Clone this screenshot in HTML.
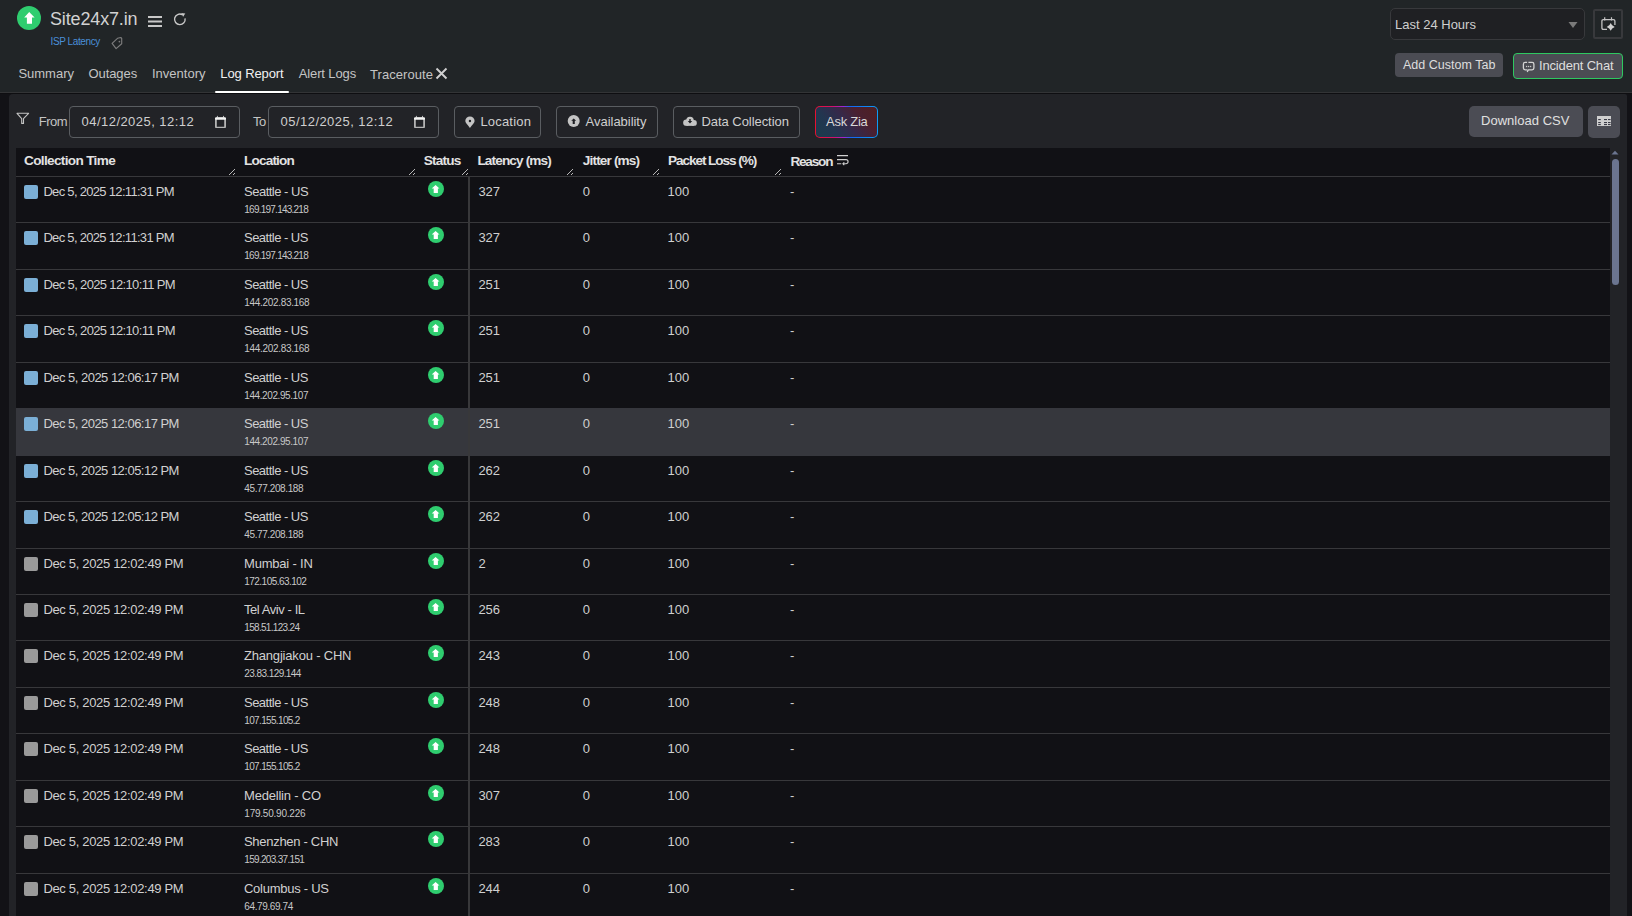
<!DOCTYPE html>
<html><head><meta charset="utf-8"><style>
html,body{margin:0;padding:0;width:1632px;height:916px;overflow:hidden;background:#121216;font-family:"Liberation Sans", sans-serif;}
.t{position:absolute;white-space:pre;line-height:1;}
.r{position:absolute;}
</style></head><body>
<div class="r" style="left:0px;top:0px;width:1632px;height:92px;background:#212527"></div>
<div class="r" style="left:0px;top:92px;width:1632px;height:1px;background:#333436"></div>
<div class="r" style="left:0px;top:93px;width:1632px;height:823px;background:#121216"></div>
<div class="r" style="left:0px;top:93px;width:1632px;height:1px;background:#0e0e11"></div>
<div class="r" style="left:9px;top:94px;width:1618px;height:822px;background:#222327;border-top-left-radius:4px;border-top-right-radius:2px"></div>
<svg class="r" style="left:17px;top:6px" width="24" height="24" viewBox="0 0 24 24"><circle cx="12" cy="12" r="12" fill="#2fcd6f"/><path d="M12.2 6 L17.6 11.6 L15 11.6 L15 17.8 L9.9 17.8 L9.9 11.6 L7.2 11.6 Z" fill="#fff"/></svg>
<div class="t" style="left:50px;top:10.16px;font-size:18px;color:#d2d2d2;letter-spacing:-0.150px;">Site24x7.in</div>
<svg class="r" style="left:148px;top:13.5px" width="15" height="14" viewBox="0 0 15 14"><rect x="0" y="2" width="14" height="2" fill="#c8c8c8"/><rect x="0" y="6.5" width="14" height="2" fill="#c8c8c8"/><rect x="0" y="11" width="14" height="2" fill="#c8c8c8"/></svg>
<svg class="r" style="left:171px;top:11px" width="18" height="18" viewBox="0 0 18 18"><path d="M14.05 7.4 A5.3 5.3 0 1 1 11.2 3.6" fill="none" stroke="#c8c8c8" stroke-width="1.35"/><path d="M10.2 1.9 L14.3 2.4 L12.1 5.8 Z" fill="#c8c8c8"/></svg>
<div class="t" style="left:50.5px;top:37.44px;font-size:10px;color:#4a8fd8;letter-spacing:-0.400px;">ISP Latency</div>
<svg class="r" style="left:110px;top:35px" width="15" height="16" viewBox="0 0 15 16"><path d="M2.1 8.3 L7.5 3.3 L10.8 2.5 L11.7 3.5 L11.7 8.8 L6.1 13.6 Z" fill="none" stroke="#7c7c7c" stroke-width="1.15" stroke-linejoin="round"/><circle cx="9.4" cy="6.6" r="0.85" fill="#7c7c7c"/></svg>
<div class="t" style="left:18.4px;top:66.80px;font-size:13px;color:#c4c4c4;">Summary</div>
<div class="t" style="left:88.5px;top:66.80px;font-size:13px;color:#c4c4c4;letter-spacing:-0.083px;">Outages</div>
<div class="t" style="left:152px;top:66.80px;font-size:13px;color:#c4c4c4;">Inventory</div>
<div class="t" style="left:220.3px;top:67.30px;font-size:13px;color:#f2f2f2;letter-spacing:-0.111px;">Log Report</div>
<div class="t" style="left:298.7px;top:67.30px;font-size:13px;color:#c4c4c4;letter-spacing:-0.111px;">Alert Logs</div>
<div class="t" style="left:370px;top:68.20px;font-size:13px;color:#c4c4c4;letter-spacing:0.056px;">Traceroute</div>
<svg class="r" style="left:435px;top:67px" width="13" height="13" viewBox="0 0 13 13"><path d="M1.5 1.5 L11.5 11.5 M11.5 1.5 L1.5 11.5" stroke="#d0d0d0" stroke-width="1.9"/></svg>
<div class="r" style="left:215px;top:91px;width:74px;height:2px;background:#fff;border-radius:1px"></div>
<div class="r" style="left:1390px;top:8px;width:195px;height:32px;box-sizing:border-box;border:1px solid #38393c;border-radius:5px;background:#1f2023"></div>
<div class="t" style="left:1395px;top:18.30px;font-size:13px;color:#cfcfcf;">Last 24 Hours</div>
<svg class="r" style="left:1568px;top:21px" width="10" height="8" viewBox="0 0 10 8"><path d="M0.5 1 L9.5 1 L5 7 Z" fill="#7a7a7a"/></svg>
<div class="r" style="left:1593px;top:9px;width:30px;height:30px;box-sizing:border-box;border:2px solid #38393c;border-radius:2px"></div>
<svg class="r" style="left:1600px;top:16px" width="17" height="16" viewBox="0 0 17 16"><path d="M7 13.3 L3.4 13.3 Q1.9 13.3 1.9 11.8 L1.9 5.1 Q1.9 3.6 3.4 3.6 L13.4 3.6 Q14.9 3.6 14.9 5.1 L14.9 9.1" fill="none" stroke="#c4c4c4" stroke-width="1.3"/><path d="M4.7 1.2 L4.7 4.6 M11.5 1.2 L11.5 4.6" stroke="#c4c4c4" stroke-width="1.2"/><path d="M10.7 7.0 Q11.7 9.9 14.7 10.9 Q11.7 11.9 10.7 14.8 Q9.7 11.9 6.7 10.9 Q9.7 9.9 10.7 7.0 Z" fill="#d0d0d0"/></svg>
<div class="r" style="left:1395px;top:53px;width:108px;height:24px;background:#4b4c53;border-radius:4px"></div>
<div class="t" style="left:1403px;top:59.22px;font-size:12.5px;color:#dedede;letter-spacing:0.022px;">Add Custom Tab</div>
<div class="r" style="left:1513px;top:53px;width:110px;height:26px;box-sizing:border-box;border:1px solid #2ec860;background:#4b4c53;border-radius:4px"></div>
<svg class="r" style="left:1522px;top:60px" width="14" height="14" viewBox="0 0 14 14"><path d="M5.1 2.4 L3.2 2.4 Q1.4 2.4 1.4 4.2 L1.4 8.0 Q1.4 9.8 3.2 9.8 L5.4 9.8 M6.4 2.4 L10.1 2.4 Q11.9 2.4 11.9 4.2 L11.9 8.0 Q11.9 9.8 10.1 9.8 L6.4 9.8 L5.2 12" fill="none" stroke="#d4d4d4" stroke-width="1.3"/><circle cx="4.6" cy="6.5" r="0.7" fill="#c8c8c8"/><circle cx="6.6" cy="6.5" r="0.7" fill="#c8c8c8"/><circle cx="8.6" cy="6.5" r="0.7" fill="#c8c8c8"/></svg>
<div class="t" style="left:1539px;top:59.00px;font-size:13px;color:#dedede;letter-spacing:-0.167px;">Incident Chat</div>
<svg class="r" style="left:16px;top:112px" width="14" height="13" viewBox="0 0 14 13"><path d="M1 1.3 L12.6 1.3 L7.5 6.6 L7.5 11.4 L5.7 11.4 L5.7 6.6 Z" fill="none" stroke="#c4c4c4" stroke-width="1.1" stroke-linejoin="round"/></svg>
<div class="t" style="left:38.7px;top:115.20px;font-size:13px;color:#c4c4c4;letter-spacing:-0.500px;">From</div>
<div class="r" style="left:69px;top:106px;width:171px;height:32px;box-sizing:border-box;border:1px solid #5a5d61;border-radius:4px"></div>
<div class="t" style="left:81.6px;top:115.20px;font-size:13px;color:#cfcfcf;letter-spacing:0.451px;">04/12/2025, 12:12</div>
<svg class="r" style="left:215px;top:114.6px" width="11" height="13" viewBox="0 0 11 13"><rect x="0.9" y="3" width="9.2" height="9.6" rx="1.2" fill="none" stroke="#b4b4b4" stroke-width="1.8"/><rect x="0" y="2.4" width="11" height="2.3" rx="0.8" fill="#f4f4f4"/><path d="M1.6 2.6 L2.3 0.4 L3.1 2.6 Z M7.8 2.6 L8.5 0.4 L9.3 2.6 Z" fill="#e8e8e8"/></svg>
<div class="t" style="left:253px;top:115.20px;font-size:13px;color:#c4c4c4;letter-spacing:-0.500px;">To</div>
<div class="r" style="left:268px;top:106px;width:171px;height:32px;box-sizing:border-box;border:1px solid #5a5d61;border-radius:4px"></div>
<div class="t" style="left:280.6px;top:115.20px;font-size:13px;color:#cfcfcf;letter-spacing:0.451px;">05/12/2025, 12:12</div>
<svg class="r" style="left:414px;top:114.6px" width="11" height="13" viewBox="0 0 11 13"><rect x="0.9" y="3" width="9.2" height="9.6" rx="1.2" fill="none" stroke="#b4b4b4" stroke-width="1.8"/><rect x="0" y="2.4" width="11" height="2.3" rx="0.8" fill="#f4f4f4"/><path d="M1.6 2.6 L2.3 0.4 L3.1 2.6 Z M7.8 2.6 L8.5 0.4 L9.3 2.6 Z" fill="#e8e8e8"/></svg>
<div class="r" style="left:454px;top:106px;width:87px;height:32px;box-sizing:border-box;border:1px solid #5a5d61;border-radius:4px"></div>
<svg class="r" style="left:465px;top:115.6px" width="10" height="13" viewBox="0 0 10 13"><path d="M4.95 12 C2.2 8.6 0.3 6.6 0.3 5.1 A4.65 4.65 0 0 1 9.6 5.1 C9.6 6.6 7.7 8.6 4.95 12 Z" fill="#c4c4c4"/><circle cx="4.95" cy="5" r="1.2" fill="#1e1f23"/></svg>
<div class="t" style="left:480.4px;top:114.60px;font-size:13px;color:#cfcfcf;letter-spacing:0.198px;">Location</div>
<div class="r" style="left:556px;top:106px;width:102px;height:32px;box-sizing:border-box;border:1px solid #5a5d61;border-radius:4px"></div>
<svg class="r" style="left:567px;top:115px" width="14" height="13" viewBox="0 0 14 13"><circle cx="6.7" cy="6.1" r="6" fill="#c4c4c4"/><path d="M6.7 3.5 L9.2 5.8 L7.8 5.8 L7.8 8.9 L5.7 8.9 L5.7 5.8 L4.2 5.8 Z" fill="#1e1f23"/></svg>
<div class="t" style="left:585.6px;top:114.60px;font-size:13px;color:#cfcfcf;letter-spacing:-0.032px;">Availability</div>
<div class="r" style="left:673px;top:106px;width:127px;height:32px;box-sizing:border-box;border:1px solid #5a5d61;border-radius:4px"></div>
<svg class="r" style="left:683px;top:116px" width="14" height="11" viewBox="0 0 14 11" fill="#c4c4c4"><circle cx="7" cy="4.6" r="3.8"/><circle cx="3.3" cy="6.7" r="3.15"/><circle cx="10.9" cy="6.9" r="2.95"/><rect x="3.3" y="6" width="7.6" height="3.85"/><path d="M6.3 3.0 L7.7 3.0 L7.7 5.1 L9.2 5.1 L7 7.6 L4.8 5.1 L6.3 5.1 Z" fill="#1e1f23"/></svg>
<div class="t" style="left:701.5px;top:114.60px;font-size:13px;color:#cfcfcf;letter-spacing:-0.053px;">Data Collection</div>
<div class="r" style="left:815px;top:106px;width:63px;height:32px;box-sizing:border-box;border-radius:5px;padding:1px;background:linear-gradient(88deg,#e8102e 0%,#d0126e 30%,#9a28d8 46%,#1566f2 56%,#0c9cf8 100%)"><div style="width:100%;height:100%;border-radius:4px;background:linear-gradient(50deg,#1b3c4c 0%,#223650 28%,#35294a 50%,#4a2030 72%,#4f1f20 100%)"></div></div>
<div class="t" style="left:826px;top:114.60px;font-size:13px;color:#d8d8d8;letter-spacing:-0.250px;">Ask Zia</div>
<div class="r" style="left:1469px;top:106px;width:114px;height:31px;background:#4b4c54;border-radius:5px"></div>
<div class="t" style="left:1481px;top:114.00px;font-size:13px;color:#e0e0e0;letter-spacing:0.024px;">Download CSV</div>
<div class="r" style="left:1588px;top:106px;width:32px;height:32px;background:#4b4c54;border-radius:5px"></div>
<svg class="r" style="left:1597px;top:116px" width="14" height="10" viewBox="0 0 14 10"><rect x="0" y="0" width="14" height="10" fill="#cfcfcf"/><rect x="1.2" y="3.0" width="2.6" height="1.1" fill="#3a3b46"/><rect x="1.2" y="6.0" width="2.6" height="1.1" fill="#3a3b46"/><rect x="1.2" y="8.0" width="2.6" height="1.1" fill="#3a3b46"/><rect x="7.0" y="3.0" width="3.0" height="1.1" fill="#3a3b46"/><rect x="7.0" y="6.0" width="3.0" height="1.1" fill="#3a3b46"/><rect x="7.0" y="8.0" width="3.0" height="1.1" fill="#3a3b46"/><rect x="11.0" y="3.0" width="2.6" height="1.1" fill="#3a3b46"/><rect x="11.0" y="6.0" width="2.6" height="1.1" fill="#3a3b46"/><rect x="11.0" y="8.0" width="2.6" height="1.1" fill="#3a3b46"/></svg>
<div class="r" style="left:16px;top:148px;width:1594px;height:768px;background:#111115"></div>
<div class="t" style="left:24px;top:154.19px;font-size:13.6px;color:#e2e2e2;font-weight:700;letter-spacing:-0.661px;">Collection Time</div>
<div class="t" style="left:244px;top:154.19px;font-size:13.6px;color:#e2e2e2;font-weight:700;letter-spacing:-0.832px;">Location</div>
<div class="t" style="left:423.8px;top:154.19px;font-size:13.6px;color:#e2e2e2;font-weight:700;letter-spacing:-0.820px;">Status</div>
<div class="t" style="left:477.4px;top:154.19px;font-size:13.6px;color:#e2e2e2;font-weight:700;letter-spacing:-0.857px;">Latency (ms)</div>
<div class="t" style="left:582.8px;top:154.19px;font-size:13.6px;color:#e2e2e2;font-weight:700;letter-spacing:-0.840px;">Jitter (ms)</div>
<div class="t" style="left:668px;top:154.19px;font-size:13.6px;color:#e2e2e2;font-weight:700;letter-spacing:-1.073px;">Packet Loss (%)</div>
<div class="t" style="left:790.4px;top:155.19px;font-size:13.6px;color:#e2e2e2;font-weight:700;letter-spacing:-1.200px;">Reason</div>
<svg class="r" style="left:229px;top:169px" width="6" height="6" viewBox="0 0 6 6" fill="#b8b8b8" shape-rendering="crispEdges"><rect x="0" y="5" width="1" height="1"/><rect x="1" y="4" width="1" height="1"/><rect x="2" y="3" width="1" height="1"/><rect x="3" y="2" width="1" height="1"/><rect x="4" y="1" width="1" height="1"/><rect x="5" y="0" width="1" height="1"/><rect x="4" y="5" width="1" height="1"/><rect x="5" y="4" width="1" height="1"/></svg>
<svg class="r" style="left:409px;top:169px" width="6" height="6" viewBox="0 0 6 6" fill="#b8b8b8" shape-rendering="crispEdges"><rect x="0" y="5" width="1" height="1"/><rect x="1" y="4" width="1" height="1"/><rect x="2" y="3" width="1" height="1"/><rect x="3" y="2" width="1" height="1"/><rect x="4" y="1" width="1" height="1"/><rect x="5" y="0" width="1" height="1"/><rect x="4" y="5" width="1" height="1"/><rect x="5" y="4" width="1" height="1"/></svg>
<svg class="r" style="left:462px;top:169px" width="6" height="6" viewBox="0 0 6 6" fill="#b8b8b8" shape-rendering="crispEdges"><rect x="0" y="5" width="1" height="1"/><rect x="1" y="4" width="1" height="1"/><rect x="2" y="3" width="1" height="1"/><rect x="3" y="2" width="1" height="1"/><rect x="4" y="1" width="1" height="1"/><rect x="5" y="0" width="1" height="1"/><rect x="4" y="5" width="1" height="1"/><rect x="5" y="4" width="1" height="1"/></svg>
<svg class="r" style="left:567px;top:169px" width="6" height="6" viewBox="0 0 6 6" fill="#b8b8b8" shape-rendering="crispEdges"><rect x="0" y="5" width="1" height="1"/><rect x="1" y="4" width="1" height="1"/><rect x="2" y="3" width="1" height="1"/><rect x="3" y="2" width="1" height="1"/><rect x="4" y="1" width="1" height="1"/><rect x="5" y="0" width="1" height="1"/><rect x="4" y="5" width="1" height="1"/><rect x="5" y="4" width="1" height="1"/></svg>
<svg class="r" style="left:653px;top:169px" width="6" height="6" viewBox="0 0 6 6" fill="#b8b8b8" shape-rendering="crispEdges"><rect x="0" y="5" width="1" height="1"/><rect x="1" y="4" width="1" height="1"/><rect x="2" y="3" width="1" height="1"/><rect x="3" y="2" width="1" height="1"/><rect x="4" y="1" width="1" height="1"/><rect x="5" y="0" width="1" height="1"/><rect x="4" y="5" width="1" height="1"/><rect x="5" y="4" width="1" height="1"/></svg>
<svg class="r" style="left:775px;top:169px" width="6" height="6" viewBox="0 0 6 6" fill="#b8b8b8" shape-rendering="crispEdges"><rect x="0" y="5" width="1" height="1"/><rect x="1" y="4" width="1" height="1"/><rect x="2" y="3" width="1" height="1"/><rect x="3" y="2" width="1" height="1"/><rect x="4" y="1" width="1" height="1"/><rect x="5" y="0" width="1" height="1"/><rect x="4" y="5" width="1" height="1"/><rect x="5" y="4" width="1" height="1"/></svg>
<svg class="r" style="left:836px;top:154px" width="14" height="13" viewBox="0 0 14 13"><path d="M1 1.6 L12 1.6 M1 5.6 L10 5.6 A2.05 2.05 0 0 1 10 9.7 L7 9.7 M1 9.7 L5.3 9.7" fill="none" stroke="#d0d0d0" stroke-width="1.15"/><path d="M8.3 8.3 L6.9 9.7 L8.3 11.1" fill="none" stroke="#d0d0d0" stroke-width="1.15"/></svg>
<div class="r" style="left:16px;top:176px;width:1594px;height:1px;background:#38383b"></div>
<div class="r" style="left:16px;top:222px;width:1594px;height:1px;background:#38383b"></div>
<div class="r" style="left:468px;top:177px;width:2px;height:46px;background:#38383a"></div>
<div class="r" style="left:24px;top:185px;width:14px;height:14px;background:#7bafd6;border-radius:2px"></div>
<div class="t" style="left:43.4px;top:184.80px;font-size:13px;color:#d0d0d0;letter-spacing:-0.690px;">Dec 5, 2025 12:11:31 PM</div>
<div class="t" style="left:244px;top:184.90px;font-size:13px;color:#d0d0d0;letter-spacing:-0.496px;">Seattle - US</div>
<div class="t" style="left:244.3px;top:205.44px;font-size:10px;color:#c8c8c8;letter-spacing:-0.761px;">169.197.143.218</div>
<svg class="r" style="left:428px;top:181.00px" width="16" height="16" viewBox="0 0 16 16"><circle cx="8" cy="8" r="8" fill="#2fcd6f"/><path d="M7.6 4 L11.5 7.6 L9.9 7.6 L9.9 11.9 L5.7 11.9 L5.7 7.6 L3.7 7.6 Z" fill="#fff"/></svg>
<div class="t" style="left:478.4px;top:184.90px;font-size:13px;color:#d0d0d0;">327</div>
<div class="t" style="left:582.8px;top:184.90px;font-size:13px;color:#d0d0d0;">0</div>
<div class="t" style="left:667.6px;top:184.90px;font-size:13px;color:#d0d0d0;">100</div>
<div class="t" style="left:790px;top:184.90px;font-size:13px;color:#d0d0d0;">-</div>
<div class="r" style="left:16px;top:269px;width:1594px;height:1px;background:#38383b"></div>
<div class="r" style="left:468px;top:223px;width:2px;height:47px;background:#38383a"></div>
<div class="r" style="left:24px;top:231px;width:14px;height:14px;background:#7bafd6;border-radius:2px"></div>
<div class="t" style="left:43.4px;top:230.80px;font-size:13px;color:#d0d0d0;letter-spacing:-0.690px;">Dec 5, 2025 12:11:31 PM</div>
<div class="t" style="left:244px;top:230.90px;font-size:13px;color:#d0d0d0;letter-spacing:-0.516px;">Seattle - US</div>
<div class="t" style="left:244.3px;top:251.43px;font-size:10px;color:#c8c8c8;letter-spacing:-0.761px;">169.197.143.218</div>
<svg class="r" style="left:428px;top:227.00px" width="16" height="16" viewBox="0 0 16 16"><circle cx="8" cy="8" r="8" fill="#2fcd6f"/><path d="M7.6 4 L11.5 7.6 L9.9 7.6 L9.9 11.9 L5.7 11.9 L5.7 7.6 L3.7 7.6 Z" fill="#fff"/></svg>
<div class="t" style="left:478.4px;top:230.90px;font-size:13px;color:#d0d0d0;">327</div>
<div class="t" style="left:582.8px;top:230.90px;font-size:13px;color:#d0d0d0;">0</div>
<div class="t" style="left:667.6px;top:230.90px;font-size:13px;color:#d0d0d0;">100</div>
<div class="t" style="left:790px;top:230.90px;font-size:13px;color:#d0d0d0;">-</div>
<div class="r" style="left:16px;top:315px;width:1594px;height:1px;background:#38383b"></div>
<div class="r" style="left:468px;top:270px;width:2px;height:46px;background:#38383a"></div>
<div class="r" style="left:24px;top:278px;width:14px;height:14px;background:#7bafd6;border-radius:2px"></div>
<div class="t" style="left:43.4px;top:277.80px;font-size:13px;color:#d0d0d0;letter-spacing:-0.645px;">Dec 5, 2025 12:10:11 PM</div>
<div class="t" style="left:244px;top:277.90px;font-size:13px;color:#d0d0d0;letter-spacing:-0.516px;">Seattle - US</div>
<div class="t" style="left:244.3px;top:298.44px;font-size:10px;color:#c8c8c8;letter-spacing:-0.321px;">144.202.83.168</div>
<svg class="r" style="left:428px;top:274.00px" width="16" height="16" viewBox="0 0 16 16"><circle cx="8" cy="8" r="8" fill="#2fcd6f"/><path d="M7.6 4 L11.5 7.6 L9.9 7.6 L9.9 11.9 L5.7 11.9 L5.7 7.6 L3.7 7.6 Z" fill="#fff"/></svg>
<div class="t" style="left:478.4px;top:277.90px;font-size:13px;color:#d0d0d0;">251</div>
<div class="t" style="left:582.8px;top:277.90px;font-size:13px;color:#d0d0d0;">0</div>
<div class="t" style="left:667.6px;top:277.90px;font-size:13px;color:#d0d0d0;">100</div>
<div class="t" style="left:790px;top:277.90px;font-size:13px;color:#d0d0d0;">-</div>
<div class="r" style="left:16px;top:362px;width:1594px;height:1px;background:#38383b"></div>
<div class="r" style="left:468px;top:316px;width:2px;height:47px;background:#38383a"></div>
<div class="r" style="left:24px;top:324px;width:14px;height:14px;background:#7bafd6;border-radius:2px"></div>
<div class="t" style="left:43.4px;top:323.80px;font-size:13px;color:#d0d0d0;letter-spacing:-0.645px;">Dec 5, 2025 12:10:11 PM</div>
<div class="t" style="left:244px;top:323.90px;font-size:13px;color:#d0d0d0;letter-spacing:-0.516px;">Seattle - US</div>
<div class="t" style="left:244.3px;top:344.44px;font-size:10px;color:#c8c8c8;letter-spacing:-0.321px;">144.202.83.168</div>
<svg class="r" style="left:428px;top:320.00px" width="16" height="16" viewBox="0 0 16 16"><circle cx="8" cy="8" r="8" fill="#2fcd6f"/><path d="M7.6 4 L11.5 7.6 L9.9 7.6 L9.9 11.9 L5.7 11.9 L5.7 7.6 L3.7 7.6 Z" fill="#fff"/></svg>
<div class="t" style="left:478.4px;top:323.90px;font-size:13px;color:#d0d0d0;">251</div>
<div class="t" style="left:582.8px;top:323.90px;font-size:13px;color:#d0d0d0;">0</div>
<div class="t" style="left:667.6px;top:323.90px;font-size:13px;color:#d0d0d0;">100</div>
<div class="t" style="left:790px;top:323.90px;font-size:13px;color:#d0d0d0;">-</div>
<div class="r" style="left:16px;top:408px;width:1594px;height:1px;background:#38383b"></div>
<div class="r" style="left:468px;top:363px;width:2px;height:46px;background:#38383a"></div>
<div class="r" style="left:24px;top:371px;width:14px;height:14px;background:#7bafd6;border-radius:2px"></div>
<div class="t" style="left:43.4px;top:370.80px;font-size:13px;color:#d0d0d0;letter-spacing:-0.517px;">Dec 5, 2025 12:06:17 PM</div>
<div class="t" style="left:244px;top:370.90px;font-size:13px;color:#d0d0d0;letter-spacing:-0.516px;">Seattle - US</div>
<div class="t" style="left:244.3px;top:391.44px;font-size:10px;color:#c8c8c8;letter-spacing:-0.413px;">144.202.95.107</div>
<svg class="r" style="left:428px;top:367.00px" width="16" height="16" viewBox="0 0 16 16"><circle cx="8" cy="8" r="8" fill="#2fcd6f"/><path d="M7.6 4 L11.5 7.6 L9.9 7.6 L9.9 11.9 L5.7 11.9 L5.7 7.6 L3.7 7.6 Z" fill="#fff"/></svg>
<div class="t" style="left:478.4px;top:370.90px;font-size:13px;color:#d0d0d0;">251</div>
<div class="t" style="left:582.8px;top:370.90px;font-size:13px;color:#d0d0d0;">0</div>
<div class="t" style="left:667.6px;top:370.90px;font-size:13px;color:#d0d0d0;">100</div>
<div class="t" style="left:790px;top:370.90px;font-size:13px;color:#d0d0d0;">-</div>
<div class="r" style="left:16px;top:408px;width:1594px;height:48px;background:#36373d"></div>
<div class="r" style="left:468px;top:409px;width:2px;height:47px;background:#38383a"></div>
<div class="r" style="left:24px;top:417px;width:14px;height:14px;background:#7bafd6;border-radius:2px"></div>
<div class="t" style="left:43.4px;top:416.80px;font-size:13px;color:#d0d0d0;letter-spacing:-0.517px;">Dec 5, 2025 12:06:17 PM</div>
<div class="t" style="left:244px;top:416.90px;font-size:13px;color:#d0d0d0;letter-spacing:-0.516px;">Seattle - US</div>
<div class="t" style="left:244.3px;top:437.44px;font-size:10px;color:#c8c8c8;letter-spacing:-0.413px;">144.202.95.107</div>
<svg class="r" style="left:428px;top:413.00px" width="16" height="16" viewBox="0 0 16 16"><circle cx="8" cy="8" r="8" fill="#2fcd6f"/><path d="M7.6 4 L11.5 7.6 L9.9 7.6 L9.9 11.9 L5.7 11.9 L5.7 7.6 L3.7 7.6 Z" fill="#fff"/></svg>
<div class="t" style="left:478.4px;top:416.90px;font-size:13px;color:#d0d0d0;">251</div>
<div class="t" style="left:582.8px;top:416.90px;font-size:13px;color:#d0d0d0;">0</div>
<div class="t" style="left:667.6px;top:416.90px;font-size:13px;color:#d0d0d0;">100</div>
<div class="t" style="left:790px;top:416.90px;font-size:13px;color:#d0d0d0;">-</div>
<div class="r" style="left:16px;top:501px;width:1594px;height:1px;background:#38383b"></div>
<div class="r" style="left:468px;top:456px;width:2px;height:46px;background:#38383a"></div>
<div class="r" style="left:24px;top:464px;width:14px;height:14px;background:#7bafd6;border-radius:2px"></div>
<div class="t" style="left:43.4px;top:463.80px;font-size:13px;color:#d0d0d0;letter-spacing:-0.517px;">Dec 5, 2025 12:05:12 PM</div>
<div class="t" style="left:244px;top:463.90px;font-size:13px;color:#d0d0d0;letter-spacing:-0.516px;">Seattle - US</div>
<div class="t" style="left:244.3px;top:484.44px;font-size:10px;color:#c8c8c8;letter-spacing:-0.390px;">45.77.208.188</div>
<svg class="r" style="left:428px;top:460.00px" width="16" height="16" viewBox="0 0 16 16"><circle cx="8" cy="8" r="8" fill="#2fcd6f"/><path d="M7.6 4 L11.5 7.6 L9.9 7.6 L9.9 11.9 L5.7 11.9 L5.7 7.6 L3.7 7.6 Z" fill="#fff"/></svg>
<div class="t" style="left:478.4px;top:463.90px;font-size:13px;color:#d0d0d0;">262</div>
<div class="t" style="left:582.8px;top:463.90px;font-size:13px;color:#d0d0d0;">0</div>
<div class="t" style="left:667.6px;top:463.90px;font-size:13px;color:#d0d0d0;">100</div>
<div class="t" style="left:790px;top:463.90px;font-size:13px;color:#d0d0d0;">-</div>
<div class="r" style="left:16px;top:548px;width:1594px;height:1px;background:#38383b"></div>
<div class="r" style="left:468px;top:502px;width:2px;height:47px;background:#38383a"></div>
<div class="r" style="left:24px;top:510px;width:14px;height:14px;background:#7bafd6;border-radius:2px"></div>
<div class="t" style="left:43.4px;top:509.80px;font-size:13px;color:#d0d0d0;letter-spacing:-0.517px;">Dec 5, 2025 12:05:12 PM</div>
<div class="t" style="left:244px;top:509.90px;font-size:13px;color:#d0d0d0;letter-spacing:-0.516px;">Seattle - US</div>
<div class="t" style="left:244.3px;top:530.43px;font-size:10px;color:#c8c8c8;letter-spacing:-0.390px;">45.77.208.188</div>
<svg class="r" style="left:428px;top:506.00px" width="16" height="16" viewBox="0 0 16 16"><circle cx="8" cy="8" r="8" fill="#2fcd6f"/><path d="M7.6 4 L11.5 7.6 L9.9 7.6 L9.9 11.9 L5.7 11.9 L5.7 7.6 L3.7 7.6 Z" fill="#fff"/></svg>
<div class="t" style="left:478.4px;top:509.90px;font-size:13px;color:#d0d0d0;">262</div>
<div class="t" style="left:582.8px;top:509.90px;font-size:13px;color:#d0d0d0;">0</div>
<div class="t" style="left:667.6px;top:509.90px;font-size:13px;color:#d0d0d0;">100</div>
<div class="t" style="left:790px;top:509.90px;font-size:13px;color:#d0d0d0;">-</div>
<div class="r" style="left:16px;top:594px;width:1594px;height:1px;background:#38383b"></div>
<div class="r" style="left:468px;top:549px;width:2px;height:46px;background:#38383a"></div>
<div class="r" style="left:24px;top:557px;width:14px;height:14px;background:#9a9a9a;border-radius:2px"></div>
<div class="t" style="left:43.4px;top:556.80px;font-size:13px;color:#d0d0d0;letter-spacing:-0.326px;">Dec 5, 2025 12:02:49 PM</div>
<div class="t" style="left:244px;top:556.90px;font-size:13px;color:#d0d0d0;letter-spacing:-0.200px;">Mumbai - IN</div>
<div class="t" style="left:244.3px;top:577.43px;font-size:10px;color:#c8c8c8;letter-spacing:-0.537px;">172.105.63.102</div>
<svg class="r" style="left:428px;top:553.00px" width="16" height="16" viewBox="0 0 16 16"><circle cx="8" cy="8" r="8" fill="#2fcd6f"/><path d="M7.6 4 L11.5 7.6 L9.9 7.6 L9.9 11.9 L5.7 11.9 L5.7 7.6 L3.7 7.6 Z" fill="#fff"/></svg>
<div class="t" style="left:478.4px;top:556.90px;font-size:13px;color:#d0d0d0;">2</div>
<div class="t" style="left:582.8px;top:556.90px;font-size:13px;color:#d0d0d0;">0</div>
<div class="t" style="left:667.6px;top:556.90px;font-size:13px;color:#d0d0d0;">100</div>
<div class="t" style="left:790px;top:556.90px;font-size:13px;color:#d0d0d0;">-</div>
<div class="r" style="left:16px;top:640px;width:1594px;height:1px;background:#38383b"></div>
<div class="r" style="left:468px;top:595px;width:2px;height:46px;background:#38383a"></div>
<div class="r" style="left:24px;top:603px;width:14px;height:14px;background:#9a9a9a;border-radius:2px"></div>
<div class="t" style="left:43.4px;top:602.80px;font-size:13px;color:#d0d0d0;letter-spacing:-0.326px;">Dec 5, 2025 12:02:49 PM</div>
<div class="t" style="left:244px;top:602.90px;font-size:13px;color:#d0d0d0;letter-spacing:-0.430px;">Tel Aviv - IL</div>
<div class="t" style="left:244.3px;top:623.43px;font-size:10px;color:#c8c8c8;letter-spacing:-0.690px;">158.51.123.24</div>
<svg class="r" style="left:428px;top:599.00px" width="16" height="16" viewBox="0 0 16 16"><circle cx="8" cy="8" r="8" fill="#2fcd6f"/><path d="M7.6 4 L11.5 7.6 L9.9 7.6 L9.9 11.9 L5.7 11.9 L5.7 7.6 L3.7 7.6 Z" fill="#fff"/></svg>
<div class="t" style="left:478.4px;top:602.90px;font-size:13px;color:#d0d0d0;">256</div>
<div class="t" style="left:582.8px;top:602.90px;font-size:13px;color:#d0d0d0;">0</div>
<div class="t" style="left:667.6px;top:602.90px;font-size:13px;color:#d0d0d0;">100</div>
<div class="t" style="left:790px;top:602.90px;font-size:13px;color:#d0d0d0;">-</div>
<div class="r" style="left:16px;top:687px;width:1594px;height:1px;background:#38383b"></div>
<div class="r" style="left:468px;top:641px;width:2px;height:47px;background:#38383a"></div>
<div class="r" style="left:24px;top:649px;width:14px;height:14px;background:#9a9a9a;border-radius:2px"></div>
<div class="t" style="left:43.4px;top:648.80px;font-size:13px;color:#d0d0d0;letter-spacing:-0.326px;">Dec 5, 2025 12:02:49 PM</div>
<div class="t" style="left:244px;top:648.90px;font-size:13px;color:#d0d0d0;letter-spacing:-0.192px;">Zhangjiakou - CHN</div>
<div class="t" style="left:244.3px;top:669.43px;font-size:10px;color:#c8c8c8;letter-spacing:-0.573px;">23.83.129.144</div>
<svg class="r" style="left:428px;top:645.00px" width="16" height="16" viewBox="0 0 16 16"><circle cx="8" cy="8" r="8" fill="#2fcd6f"/><path d="M7.6 4 L11.5 7.6 L9.9 7.6 L9.9 11.9 L5.7 11.9 L5.7 7.6 L3.7 7.6 Z" fill="#fff"/></svg>
<div class="t" style="left:478.4px;top:648.90px;font-size:13px;color:#d0d0d0;">243</div>
<div class="t" style="left:582.8px;top:648.90px;font-size:13px;color:#d0d0d0;">0</div>
<div class="t" style="left:667.6px;top:648.90px;font-size:13px;color:#d0d0d0;">100</div>
<div class="t" style="left:790px;top:648.90px;font-size:13px;color:#d0d0d0;">-</div>
<div class="r" style="left:16px;top:733px;width:1594px;height:1px;background:#38383b"></div>
<div class="r" style="left:468px;top:688px;width:2px;height:46px;background:#38383a"></div>
<div class="r" style="left:24px;top:696px;width:14px;height:14px;background:#9a9a9a;border-radius:2px"></div>
<div class="t" style="left:43.4px;top:695.80px;font-size:13px;color:#d0d0d0;letter-spacing:-0.326px;">Dec 5, 2025 12:02:49 PM</div>
<div class="t" style="left:244px;top:695.90px;font-size:13px;color:#d0d0d0;letter-spacing:-0.516px;">Seattle - US</div>
<div class="t" style="left:244.3px;top:716.43px;font-size:10px;color:#c8c8c8;letter-spacing:-0.656px;">107.155.105.2</div>
<svg class="r" style="left:428px;top:692.00px" width="16" height="16" viewBox="0 0 16 16"><circle cx="8" cy="8" r="8" fill="#2fcd6f"/><path d="M7.6 4 L11.5 7.6 L9.9 7.6 L9.9 11.9 L5.7 11.9 L5.7 7.6 L3.7 7.6 Z" fill="#fff"/></svg>
<div class="t" style="left:478.4px;top:695.90px;font-size:13px;color:#d0d0d0;">248</div>
<div class="t" style="left:582.8px;top:695.90px;font-size:13px;color:#d0d0d0;">0</div>
<div class="t" style="left:667.6px;top:695.90px;font-size:13px;color:#d0d0d0;">100</div>
<div class="t" style="left:790px;top:695.90px;font-size:13px;color:#d0d0d0;">-</div>
<div class="r" style="left:16px;top:780px;width:1594px;height:1px;background:#38383b"></div>
<div class="r" style="left:468px;top:734px;width:2px;height:47px;background:#38383a"></div>
<div class="r" style="left:24px;top:742px;width:14px;height:14px;background:#9a9a9a;border-radius:2px"></div>
<div class="t" style="left:43.4px;top:741.80px;font-size:13px;color:#d0d0d0;letter-spacing:-0.326px;">Dec 5, 2025 12:02:49 PM</div>
<div class="t" style="left:244px;top:741.90px;font-size:13px;color:#d0d0d0;letter-spacing:-0.516px;">Seattle - US</div>
<div class="t" style="left:244.3px;top:762.43px;font-size:10px;color:#c8c8c8;letter-spacing:-0.656px;">107.155.105.2</div>
<svg class="r" style="left:428px;top:738.00px" width="16" height="16" viewBox="0 0 16 16"><circle cx="8" cy="8" r="8" fill="#2fcd6f"/><path d="M7.6 4 L11.5 7.6 L9.9 7.6 L9.9 11.9 L5.7 11.9 L5.7 7.6 L3.7 7.6 Z" fill="#fff"/></svg>
<div class="t" style="left:478.4px;top:741.90px;font-size:13px;color:#d0d0d0;">248</div>
<div class="t" style="left:582.8px;top:741.90px;font-size:13px;color:#d0d0d0;">0</div>
<div class="t" style="left:667.6px;top:741.90px;font-size:13px;color:#d0d0d0;">100</div>
<div class="t" style="left:790px;top:741.90px;font-size:13px;color:#d0d0d0;">-</div>
<div class="r" style="left:16px;top:826px;width:1594px;height:1px;background:#38383b"></div>
<div class="r" style="left:468px;top:781px;width:2px;height:46px;background:#38383a"></div>
<div class="r" style="left:24px;top:789px;width:14px;height:14px;background:#9a9a9a;border-radius:2px"></div>
<div class="t" style="left:43.4px;top:788.80px;font-size:13px;color:#d0d0d0;letter-spacing:-0.326px;">Dec 5, 2025 12:02:49 PM</div>
<div class="t" style="left:244px;top:788.90px;font-size:13px;color:#d0d0d0;letter-spacing:-0.196px;">Medellin - CO</div>
<div class="t" style="left:244.3px;top:809.43px;font-size:10px;color:#c8c8c8;letter-spacing:-0.223px;">179.50.90.226</div>
<svg class="r" style="left:428px;top:785.00px" width="16" height="16" viewBox="0 0 16 16"><circle cx="8" cy="8" r="8" fill="#2fcd6f"/><path d="M7.6 4 L11.5 7.6 L9.9 7.6 L9.9 11.9 L5.7 11.9 L5.7 7.6 L3.7 7.6 Z" fill="#fff"/></svg>
<div class="t" style="left:478.4px;top:788.90px;font-size:13px;color:#d0d0d0;">307</div>
<div class="t" style="left:582.8px;top:788.90px;font-size:13px;color:#d0d0d0;">0</div>
<div class="t" style="left:667.6px;top:788.90px;font-size:13px;color:#d0d0d0;">100</div>
<div class="t" style="left:790px;top:788.90px;font-size:13px;color:#d0d0d0;">-</div>
<div class="r" style="left:16px;top:873px;width:1594px;height:1px;background:#38383b"></div>
<div class="r" style="left:468px;top:827px;width:2px;height:47px;background:#38383a"></div>
<div class="r" style="left:24px;top:835px;width:14px;height:14px;background:#9a9a9a;border-radius:2px"></div>
<div class="t" style="left:43.4px;top:834.80px;font-size:13px;color:#d0d0d0;letter-spacing:-0.326px;">Dec 5, 2025 12:02:49 PM</div>
<div class="t" style="left:244px;top:834.90px;font-size:13px;color:#d0d0d0;letter-spacing:-0.296px;">Shenzhen - CHN</div>
<div class="t" style="left:244.3px;top:855.43px;font-size:10px;color:#c8c8c8;letter-spacing:-0.690px;">159.203.37.151</div>
<svg class="r" style="left:428px;top:831.00px" width="16" height="16" viewBox="0 0 16 16"><circle cx="8" cy="8" r="8" fill="#2fcd6f"/><path d="M7.6 4 L11.5 7.6 L9.9 7.6 L9.9 11.9 L5.7 11.9 L5.7 7.6 L3.7 7.6 Z" fill="#fff"/></svg>
<div class="t" style="left:478.4px;top:834.90px;font-size:13px;color:#d0d0d0;">283</div>
<div class="t" style="left:582.8px;top:834.90px;font-size:13px;color:#d0d0d0;">0</div>
<div class="t" style="left:667.6px;top:834.90px;font-size:13px;color:#d0d0d0;">100</div>
<div class="t" style="left:790px;top:834.90px;font-size:13px;color:#d0d0d0;">-</div>
<div class="r" style="left:16px;top:919px;width:1594px;height:1px;background:#38383b"></div>
<div class="r" style="left:468px;top:874px;width:2px;height:46px;background:#38383a"></div>
<div class="r" style="left:24px;top:882px;width:14px;height:14px;background:#9a9a9a;border-radius:2px"></div>
<div class="t" style="left:43.4px;top:881.80px;font-size:13px;color:#d0d0d0;letter-spacing:-0.326px;">Dec 5, 2025 12:02:49 PM</div>
<div class="t" style="left:244px;top:881.90px;font-size:13px;color:#d0d0d0;letter-spacing:-0.264px;">Columbus - US</div>
<div class="t" style="left:244.3px;top:902.43px;font-size:10px;color:#c8c8c8;letter-spacing:-0.390px;">64.79.69.74</div>
<svg class="r" style="left:428px;top:878.00px" width="16" height="16" viewBox="0 0 16 16"><circle cx="8" cy="8" r="8" fill="#2fcd6f"/><path d="M7.6 4 L11.5 7.6 L9.9 7.6 L9.9 11.9 L5.7 11.9 L5.7 7.6 L3.7 7.6 Z" fill="#fff"/></svg>
<div class="t" style="left:478.4px;top:881.90px;font-size:13px;color:#d0d0d0;">244</div>
<div class="t" style="left:582.8px;top:881.90px;font-size:13px;color:#d0d0d0;">0</div>
<div class="t" style="left:667.6px;top:881.90px;font-size:13px;color:#d0d0d0;">100</div>
<div class="t" style="left:790px;top:881.90px;font-size:13px;color:#d0d0d0;">-</div>
<svg class="r" style="left:1611px;top:150px" width="8" height="5" viewBox="0 0 8 5"><path d="M0.5 4.5 L4 0.8 L7.5 4.5 Z" fill="#6b7590"/></svg>
<div class="r" style="left:1612px;top:159px;width:7px;height:126px;background:#6b7590;border-radius:3.5px"></div>
</body></html>
